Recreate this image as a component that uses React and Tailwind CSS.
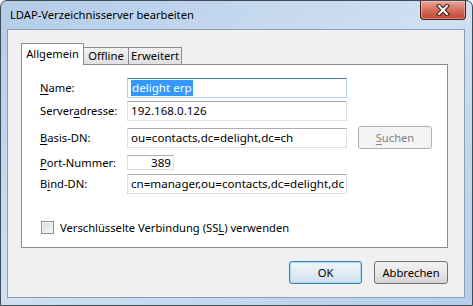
import React from 'react';

const ui = "font-['Noto_Sans',sans-serif] text-[11.2px] leading-none";

function Key({ children }) {
  return <span className="underline underline-offset-[2px]">{children}</span>;
}

function Field({ label, value, width = 'w-[220px]', height = 'h-[20px]', focused, right, selected }) {
  return (
    <div className="flex items-center">
      <div className="w-[87px] text-black">{label}</div>
      <div
        className={`${width} ${height} flex items-center overflow-hidden border bg-white text-[11.6px] ${
          focused
            ? 'border-[#b5cfe7] border-t-[#3d7bad]'
            : 'border-[#dbdfe6] border-t-[#abadb3]'
        } ${right ? 'justify-end pr-[2px]' : 'pl-[3px]'}`}
      >
        {selected ? (
          <span className="bg-[#3399ff] px-px py-[2px] text-white">{value}</span>
        ) : (
          <span className="whitespace-nowrap text-black">{value}</span>
        )}
      </div>
    </div>
  );
}

function CloseButton() {
  return (
    <div className="flex h-[19px] w-[46px] items-center justify-center rounded-b-[4px] border border-t-0 border-[#4a1a14] bg-gradient-to-b from-[#e8a69a] via-[#d2705f] to-[#c0412d] shadow-[inset_0_0_0_1px_rgba(255,220,210,0.45)]">
      <svg width="14" height="12" viewBox="0 0 14 12">
        <path d="M3 2 L11 10 M11 2 L3 10" stroke="#3b1510" strokeWidth="4.2" strokeLinecap="square" />
        <path d="M3 2 L11 10 M11 2 L3 10" stroke="#ffffff" strokeWidth="2.2" strokeLinecap="square" />
      </svg>
    </div>
  );
}

function Button({ children, def, disabled, className = '' }) {
  let tone = 'border-[#707070] bg-gradient-to-b from-[#f2f2f2] via-[#e6e6e6] to-[#d4d4d4] text-black';
  if (def) tone = 'border-[#3c7fb1] bg-gradient-to-b from-[#f1f6fa] via-[#e2ecf4] to-[#cfdfec] text-black shadow-[inset_0_0_0_1px_#a9dbf6]';
  if (disabled) tone = 'border-[#adb2b5] bg-[#f4f4f4] text-[#838383]';
  return (
    <div className={`flex h-[23px] items-center justify-center rounded-[3px] border ${tone} ${className}`}>
      {children}
    </div>
  );
}

export default function App() {
  return (
    <div className={`${ui} h-[306px] w-[473px] bg-[#f0f0f0]`}>
      <div className="flex h-[306px] w-[473px] flex-col rounded-t-[7px] border border-[#404b58] bg-gradient-to-br from-[#b4cce8] via-[#cfe0f2] to-[#b6cfea]">
        <div className="flex h-[28px] shrink-0 items-start justify-between pl-[9px] pr-[6px]">
          <div className="self-center pb-[1px] text-black">LDAP-Verzeichnisserver bearbeiten</div>
          <CloseButton />
        </div>

        <div className="mb-[7px] ml-[6px] mr-[7px] flex flex-1 flex-col border border-[#8a9eb6] bg-[#f0f0f0] pl-[13px] pr-[16px] pt-[13px]">
          <div className="flex h-[21px] items-end">
            <div className="relative z-10 -mb-px flex h-[22px] w-[63px] items-center justify-center border border-b-0 border-[#898c95] bg-white pb-[2px] text-black">
              Allgemein
            </div>
            <div className="flex h-[17px] w-[45px] items-center justify-center border border-b-0 border-l-0 border-[#898c95] bg-gradient-to-b from-[#f2f2f2] to-[#e0e0e0] text-black">
              Offline
            </div>
            <div className="flex h-[17px] w-[53px] items-center justify-center border border-b-0 border-l-0 border-[#898c95] bg-gradient-to-b from-[#f2f2f2] to-[#e0e0e0] text-black">
              Erweitert
            </div>
          </div>

          <div className="flex h-[184px] flex-col border border-[#898c95] bg-white pl-[18px] pt-[13px]">
            <Field label={<><Key>N</Key>ame:</>} value="delight erp" focused selected />
            <div className="mt-[3px]">
              <Field label={<>Server<Key>a</Key>dresse:</>} value="192.168.0.126" />
            </div>
            <div className="mt-[5px] flex h-[23px] items-center gap-[11px]">
              <Field label={<><Key>B</Key>asis-DN:</>} value="ou=contacts,dc=delight,dc=ch" />
              <Button disabled className="w-[74px]">
                <span><Key>S</Key>uchen</span>
              </Button>
            </div>
            <div className="mt-[6px]">
              <Field label={<><Key>P</Key>ort-Nummer:</>} value="389" width="w-[47px]" height="h-[15px]" right />
            </div>
            <div className="mt-[4px]">
              <Field label={<>B<Key>i</Key>nd-DN:</>} value="cn=manager,ou=contacts,dc=delight,dc" />
            </div>

            <div className="mt-[27px] flex items-center gap-[6px] pl-px">
              <div className="h-[13px] w-[13px] border border-[#8e8f8f] bg-gradient-to-br from-[#dcdcdc] to-[#f6f6f6] shadow-[inset_0_0_0_1px_#f4f4f4]" />
              <span className="text-black">
                Verschlüsselte Verbindung (SS<Key>L</Key>) verwenden
              </span>
            </div>
          </div>

          <div className="mt-[13px] flex justify-end gap-[12px]">
            <Button def className="w-[73px]">OK</Button>
            <Button className="w-[74px]">Abbrechen</Button>
          </div>
        </div>
      </div>
    </div>
  );
}
